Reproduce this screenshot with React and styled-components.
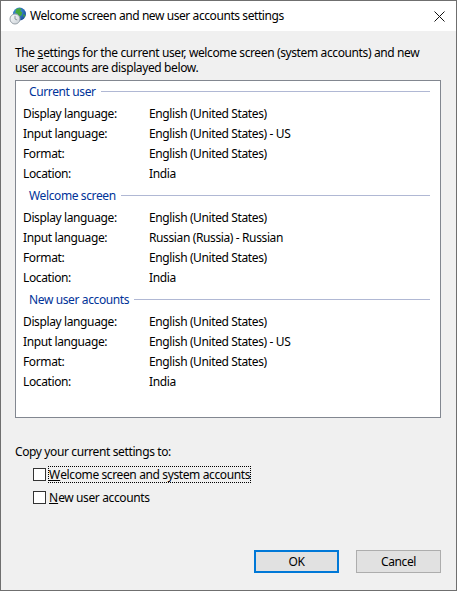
import React from "react";
import styled, { createGlobalStyle } from "styled-components";

const Global = createGlobalStyle`
  html, body { margin: 0; padding: 0; background: #f0f0f0; }
  body { font-family: "Noto Sans", "Open Sans", sans-serif; font-size: 12px; color: #000; letter-spacing: -0.38px; }
  u { text-underline-offset: 1px; letter-spacing: 0; }
`;

const Dialog = styled.div`
  box-sizing: border-box; width: 457px; height: 591px;
  border: 1px solid #6f6f6f;
  background: #f0f0f0; display: flex; flex-direction: column;
`;
const TitleBar = styled.div`
  height: 30px; background: #fff; display: flex; align-items: center;
  padding: 0 9px 0 8px; flex: none;
`;
const TitleText = styled.div`
  margin-left: 3px; flex: 1; line-height: 16px; letter-spacing: -0.42px;
`;
const Close = styled.svg` width: 11px; height: 11px; display: block; margin-right: 2px; margin-top: 1px; `;
const Body = styled.div`
  flex: 1; display: flex; flex-direction: column; padding: 14px 15px 17px 14px; min-height: 0;
`;
const Intro = styled.p`
  margin: 0; line-height: 15px; height: 35px; white-space: pre-line;
`;
const Panel = styled.div`
  box-sizing: border-box; height: 338px; background: #fff; border: 1px solid #828790;
  padding: 1px 10px 0 7px; flex: none;
`;
const Group = styled.section` margin-bottom: 3px; `;
const GroupHead = styled.div`
  box-sizing: border-box; display: flex; align-items: center; height: 21px; padding: 0 0 3px 6px; color: #003399; gap: 5px;
  &::after { content: ""; flex: 1; height: 1px; background: #b0b8d4; }
`;
const Row = styled.div`
  display: grid; grid-template-columns: 126px 1fr; height: 20px; align-items: center;
`;
const CopyLabel = styled.div` margin-top: 26px; line-height: 16px; `;
const Checks = styled.div` display: flex; flex-direction: column; gap: 10px; margin-top: 8px; padding-left: 18px; `;
const CheckRow = styled.label` display: flex; align-items: center; height: 13px; `;
const Box = styled.span`
  box-sizing: border-box; width: 13px; height: 13px; background: #fff; border: 1px solid #333; flex: none;
`;
const CheckText = styled.span`
  margin-left: 3px; line-height: 15px;
  outline: ${p => (p.$focus ? "1px dotted #000" : "none")};
`;
const Footer = styled.div` margin-top: auto; display: flex; justify-content: flex-end; gap: 17px; `;
const Button = styled.button`
  box-sizing: border-box; width: 85px; height: 23px; padding: 0; font: inherit; letter-spacing: inherit; color: #000;
  background: #e1e1e1; border: ${p => (p.$primary ? "2px solid #0078d7" : "1px solid #adadad")};
`;

const groups = [
  { title: "Current user", input: "English (United States) - US" },
  { title: "Welcome screen", input: "Russian (Russia) - Russian" },
  { title: "New user accounts", input: "English (United States) - US" },
];

const GlobeIcon = () => (
  <svg width="18" height="18" viewBox="0 0 18 18">
    <defs>
      <radialGradient id="g" cx="0.4" cy="0.35" r="0.8">
        <stop offset="0" stopColor="#4aa6ea" />
        <stop offset="1" stopColor="#0f3a8c" />
      </radialGradient>
      <linearGradient id="c" x1="0" y1="0" x2="1" y2="1">
        <stop offset="0" stopColor="#ffffff" />
        <stop offset="1" stopColor="#c9d0d6" />
      </linearGradient>
    </defs>
    <circle cx="10.5" cy="7" r="6.5" fill="url(#g)" />
    <path d="M7 2.5c2-1.5 4-1.6 5.5-.6l-1.2 2 2 1.5-1 3-2.5 1-1-2.5-2.5-1z" fill="#46a83a" />
    <path d="M14 7.5l2.4.3-1.4 3z" fill="#46a83a" />
    <circle cx="6" cy="12" r="5" fill="url(#c)" stroke="#97a0a8" />
    <path d="M6 8.8V12l2.2 1" fill="none" stroke="#7a848c" strokeWidth="0.8" />
  </svg>
);

const labels = ["Display language:", "Input language:", "Format:", "Location:"];

export default function App() {
  return (
    <>
      <Global />
      <Dialog>
        <TitleBar>
          <GlobeIcon />
          <TitleText>Welcome screen and new user accounts settings</TitleText>
          <Close viewBox="0 0 11 11">
            <path d="M.5.5l10 10M10.5.5l-10 10" stroke="#111" strokeWidth="1" fill="none" />
          </Close>
        </TitleBar>
        <Body>
          <Intro>
            The <u>s</u>ettings for the current user, welcome screen (system accounts) and new{"\n"}user accounts are displayed below.
          </Intro>
          <Panel>
            {groups.map(g => {
              const values = ["English (United States)", g.input, "English (United States)", "India"];
              return (
                <Group key={g.title}>
                  <GroupHead>{g.title}</GroupHead>
                  {labels.map((l, i) => (
                    <Row key={l}><span>{l}</span><span>{values[i]}</span></Row>
                  ))}
                </Group>
              );
            })}
          </Panel>
          <CopyLabel>Copy your current settings to:</CopyLabel>
          <Checks>
            <CheckRow><Box /><CheckText $focus><u>W</u>elcome screen and system accounts</CheckText></CheckRow>
            <CheckRow><Box /><CheckText><u>N</u>ew user accounts</CheckText></CheckRow>
          </Checks>
          <Footer>
            <Button $primary>OK</Button>
            <Button>Cancel</Button>
          </Footer>
        </Body>
      </Dialog>
    </>
  );
}
